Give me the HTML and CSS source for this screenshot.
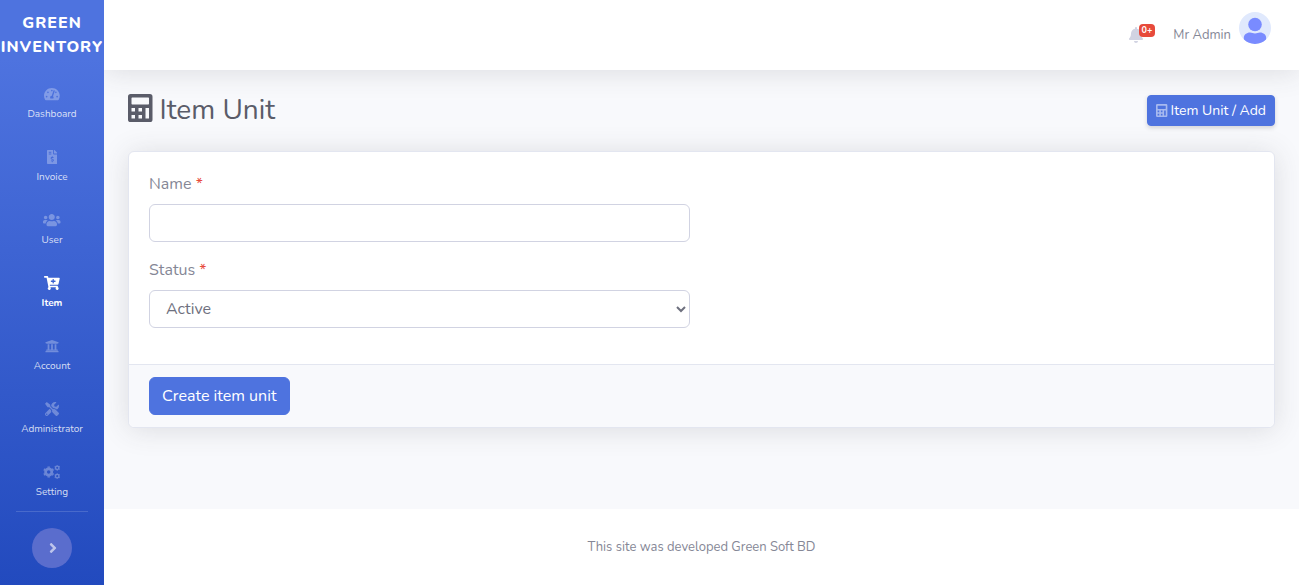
FILE: index.html
```html
<!DOCTYPE html>
<html lang="en">
<head>
    <meta charset="UTF-8">
    <meta name="viewport" content="width=device-width, initial-scale=1.0">
    <title>Item Unit</title>
    <link rel="stylesheet" href="styles.css">
</head>
<body>
    <div class="wrapper">
        <nav class="sidebar">
            <a class="brand" href="#">GREEN INVENTORY</a>
            <ul class="nav">
                <li>
                    <a class="nav-link" href="#">
                        <svg class="icon" viewBox="0 0 576 512" aria-hidden="true"><path d="M288 32C128.94 32 0 160.94 0 320c0 52.8 14.25 102.26 39.06 144.8 5.61 9.62 16.3 15.2 27.44 15.2h443c11.14 0 21.83-5.58 27.44-15.2C561.75 422.26 576 372.8 576 320c0-159.06-128.94-288-288-288zm0 64c14.71 0 26.58 10.13 30.32 23.65-1.11 2.26-2.64 4.23-3.45 6.67l-9.22 27.67c-5.13 3.49-10.97 6.01-17.64 6.01-17.67 0-32-14.33-32-32S270.33 96 288 96zM96 384c-17.67 0-32-14.33-32-32s14.33-32 32-32 32 14.33 32 32-14.33 32-32 32zm48-160c-17.67 0-32-14.33-32-32s14.33-32 32-32 32 14.33 32 32-14.33 32-32 32zm246.77-72.41l-61.33 184C343.13 347.33 352 364.54 352 384c0 11.72-3.38 22.55-8.88 32H232.88c-5.5-9.45-8.88-20.28-8.88-32 0-33.94 26.5-61.43 59.9-63.59l61.34-184.01c4.17-12.56 17.73-19.45 30.36-15.17 12.57 4.19 19.35 17.79 15.17 30.36zm14.66 57.2l15.52-46.55c3.47-1.29 7.13-2.23 11.05-2.23 17.67 0 32 14.33 32 32s-14.33 32-32 32c-11.38-.01-20.89-6.28-26.57-15.22zM480 384c-17.67 0-32-14.33-32-32s14.33-32 32-32 32 14.33 32 32-14.33 32-32 32z"/></svg>
                        <span>Dashboard</span>
                    </a>
                </li>
                <li>
                    <a class="nav-link" href="#">
                        <svg class="icon" viewBox="0 0 384 512" aria-hidden="true"><path d="M377 105L279.1 7c-4.5-4.5-10.6-7-17-7H256v128h128v-6.1c0-6.3-2.5-12.4-7-16.9zm-153 31V0H24C10.7 0 0 10.7 0 24v464c0 13.3 10.7 24 24 24h336c13.3 0 24-10.7 24-24V160H248c-13.2 0-24-10.8-24-24zM64 72c0-4.42 3.58-8 8-8h80c4.42 0 8 3.58 8 8v16c0 4.42-3.58 8-8 8H72c-4.42 0-8-3.58-8-8V72zm0 80v-16c0-4.42 3.58-8 8-8h80c4.42 0 8 3.58 8 8v16c0 4.42-3.58 8-8 8H72c-4.42 0-8-3.58-8-8zm144 263.88V440c0 4.42-3.58 8-8 8h-16c-4.42 0-8-3.58-8-8v-24.29c-11.29-.58-22.27-4.52-31.37-11.35-3.9-2.93-4.1-8.77-.57-12.14l11.75-11.21c2.77-2.64 6.89-2.76 10.13-.73 3.87 2.42 8.26 3.72 12.82 3.72h28.11c6.5 0 11.8-5.92 11.8-13.19 0-5.95-3.61-11.19-8.77-12.73l-45-13.5c-18.59-5.58-31.58-23.42-31.58-43.39 0-24.52 19.05-44.44 42.67-45.07V232c0-4.42 3.58-8 8-8h16c4.42 0 8 3.58 8 8v24.29c11.29.58 22.27 4.51 31.37 11.35 3.9 2.93 4.1 8.77.57 12.14l-11.75 11.21c-2.77 2.64-6.89 2.76-10.13.73-3.87-2.43-8.26-3.72-12.82-3.72h-28.11c-6.5 0-11.8 5.92-11.8 13.19 0 5.95 3.61 11.19 8.77 12.73l45 13.5c18.59 5.58 31.58 23.42 31.58 43.39 0 24.53-19.05 44.44-42.67 45.07z"/></svg>
                        <span>Invoice</span>
                    </a>
                </li>
                <li>
                    <a class="nav-link" href="#">
                        <svg class="icon" viewBox="0 0 640 512" aria-hidden="true"><path d="M96 224c35.3 0 64-28.7 64-64s-28.7-64-64-64-64 28.7-64 64 28.7 64 64 64zm448 0c35.3 0 64-28.7 64-64s-28.7-64-64-64-64 28.7-64 64 28.7 64 64 64zm32 32h-64c-17.6 0-33.5 7.1-45.1 18.6 40.3 22.1 68.9 62 75.1 109.4h66c17.7 0 32-14.3 32-32v-32c0-35.3-28.7-64-64-64zm-256 0c61.9 0 112-50.1 112-112S381.9 32 320 32 208 82.1 208 144s50.1 112 112 112zm76.8 32h-8.3c-20.8 10-43.9 16-68.5 16s-47.6-6-68.5-16h-8.3C179.6 288 128 339.6 128 403.2V432c0 26.5 21.5 48 48 48h288c26.5 0 48-21.5 48-48v-28.8c0-63.6-51.6-115.2-115.2-115.2zm-223.7-13.4C161.5 263.1 145.6 256 128 256H64c-35.3 0-64 28.7-64 64v32c0 17.7 14.3 32 32 32h65.9c6.3-47.4 34.9-87.3 75.2-109.4z"/></svg>
                        <span>User</span>
                    </a>
                </li>
                <li>
                    <a class="nav-link active" href="#">
                        <svg class="icon" viewBox="0 0 576 512" aria-hidden="true"><path d="M504.717 320H211.572l6.545 32h268.418c15.401 0 26.816 14.301 23.403 29.319l-5.517 24.276C523.112 414.668 536 433.828 536 456c0 31.202-25.519 56.444-56.824 55.994-29.823-.429-54.35-24.631-55.155-54.447-.44-16.287 6.085-31.049 16.803-41.548H231.176C241.553 426.165 248 440.326 248 456c0 31.813-26.528 57.431-58.67 55.938-28.54-1.325-51.751-24.385-53.251-52.917-1.158-22.034 10.436-41.455 28.051-51.586L93.883 64H24C10.745 64 0 53.255 0 40V24C0 10.745 10.745 0 24 0h102.529c11.401 0 21.228 8.021 23.513 19.19L159.208 64H551.99c15.401 0 26.816 14.301 23.403 29.319l-47.273 208C525.637 312.246 515.923 320 504.717 320zM408 168h-48v-40c0-8.837-7.163-16-16-16h-16c-8.837 0-16 7.163-16 16v40h-48c-8.837 0-16 7.163-16 16v16c0 8.837 7.163 16 16 16h48v40c0 8.837 7.163 16 16 16h16c8.837 0 16-7.163 16-16v-40h48c8.837 0 16-7.163 16-16v-16c0-8.837-7.163-16-16-16z"/></svg>
                        <span>Item</span>
                    </a>
                </li>
                <li>
                    <a class="nav-link" href="#">
                        <svg class="icon" viewBox="0 0 512 512" aria-hidden="true"><path d="M496 128v16a8 8 0 0 1-8 8h-24v12c0 6.627-5.373 12-12 12H60c-6.627 0-12-5.373-12-12v-12H24a8 8 0 0 1-8-8v-16a8 8 0 0 1 4.941-7.392l232-88a7.996 7.996 0 0 1 6.118 0l232 88A8 8 0 0 1 496 128zm-24 304H40c-13.255 0-24 10.745-24 24v16a8 8 0 0 0 8 8h464a8 8 0 0 0 8-8v-16c0-13.255-10.745-24-24-24zM96 192v192H60c-6.627 0-12 5.373-12 12v20h416v-20c0-6.627-5.373-12-12-12h-36V192h-64v192h-64V192h-64v192h-64V192H96z"/></svg>
                        <span>Account</span>
                    </a>
                </li>
                <li>
                    <a class="nav-link" href="#">
                        <svg class="icon" viewBox="0 0 512 512" aria-hidden="true"><path d="M501.1 395.7L384 278.6c-23.1-23.1-57.6-27.6-85.4-13.9L192 158.1V96L64 0 0 64l96 128h62.1l106.6 106.6c-13.6 27.8-9.2 62.3 13.9 85.4l117.1 117.1c14.6 14.6 38.2 14.6 52.7 0l52.7-52.7c14.5-14.6 14.5-38.2 0-52.7zM331.7 225c28.3 0 54.9 11 74.9 31l19.4 19.4c15.8-6.9 30.8-16.5 43.8-29.5 37.1-37.1 49.7-89.3 37.9-136.7-2.2-9-13.5-12.1-20.1-5.5l-74.4 74.4-67.9-11.3L334 98.9l74.4-74.4c6.6-6.6 3.4-17.9-5.7-20.2-47.4-11.7-99.6.9-136.6 37.9-28.5 28.5-41.9 66.1-41.2 103.6l82.1 82.1c8.1-1.9 16.5-2.9 24.7-2.9zm-103.9 82l-56.7-56.7L18.7 402.8c-25 25-25 65.5 0 90.5s65.5 25 90.5 0l123.6-123.6c-7.6-19.9-9.9-41.6-5-62.7zM64 472c-13.2 0-24-10.8-24-24 0-13.3 10.7-24 24-24s24 10.7 24 24c0 13.2-10.7 24-24 24z"/></svg>
                        <span>Administrator</span>
                    </a>
                </li>
                <li>
                    <a class="nav-link" href="#">
                        <svg class="icon gears" viewBox="0 0 640 512" aria-hidden="true">
                            <circle cx="208" cy="256" r="114" stroke-width="100"/>
                            <path stroke-width="88" d="M208 54v50M208 408v50M33 155l43 25M340 332l43 25M33 357l43-25M340 180l43-25"/>
                            <circle cx="520" cy="104" r="64" stroke-width="52"/>
                            <path stroke-width="52" d="M520 0v20M520 188v20M430 52l17 10M593 146l17 10M430 156l17-10M593 62l17-10"/>
                            <circle cx="520" cy="408" r="64" stroke-width="52"/>
                            <path stroke-width="52" d="M520 304v20M520 492v20M430 356l17 10M593 450l17 10M430 460l17-10M593 366l17-10"/>
                        </svg>
                        <span>Setting</span>
                    </a>
                </li>
            </ul>
            <hr class="divider">
            <button class="toggle" type="button" aria-label="Toggle sidebar">
                <svg class="icon" viewBox="0 0 256 512" aria-hidden="true"><path d="M224.3 273l-136 136c-9.4 9.4-24.6 9.4-33.9 0l-22.6-22.6c-9.4-9.4-9.4-24.6 0-33.9l96.4-96.4-96.4-96.4c-9.4-9.4-9.4-24.6 0-33.9L54.3 103c9.4-9.4 24.6-9.4 33.9 0l136 136c9.5 9.4 9.5 24.6.1 34z"/></svg>
            </button>
        </nav>

        <div class="content">
            <header class="topbar">
                <a class="alerts" href="#" aria-label="Alerts">
                    <svg class="icon" viewBox="0 0 448 512" aria-hidden="true"><path d="M224 512c35.32 0 63.97-28.65 63.97-64H160.03c0 35.35 28.65 64 63.97 64zm215.39-149.71c-19.32-20.76-55.47-51.99-55.47-154.29 0-77.7-54.48-139.9-127.94-155.16V32c0-17.67-14.32-32-31.98-32s-31.98 14.33-31.98 32v20.84C118.56 68.1 64.08 130.3 64.08 208c0 102.3-36.15 133.53-55.47 154.29-6 6.45-8.66 14.16-8.61 21.71.11 16.4 12.98 32 32.1 32h383.8c19.12 0 32-15.6 32.1-32 .05-7.55-2.61-15.27-8.61-21.71z"/></svg>
                    <span class="badge">0+</span>
                </a>
                <a class="user" href="#">
                    <span>Mr Admin</span>
                    <svg class="avatar" viewBox="0 0 32 32" aria-hidden="true">
                        <circle cx="16" cy="16" r="16" fill="#e0e9fd"/>
                        <circle cx="16" cy="12.500" r="6.800" fill="#798bff"/>
                        <path fill="#798bff" d="M5 27.600c-1-4 2-7 6-7 2 0 3 1 5 1s3-1 5-1c4 0 7 3 6 7a16 16 0 0 1-22 0z"/>
                    </svg>
                </a>
            </header>

            <main class="main">
                <div class="heading">
                    <h1>
                        <svg class="icon" viewBox="0 0 448 512" aria-hidden="true"><path fill-rule="evenodd" d="M48 0h352a48 48 0 0 1 48 48v416a48 48 0 0 1-48 48H48a48 48 0 0 1-48-48V48A48 48 0 0 1 48 0zM77 64a13 13 0 0 0-13 13v102a13 13 0 0 0 13 13h294a13 13 0 0 0 13-13V77a13 13 0 0 0-13-13zM64 256h64v64H64zM192 256h64v64h-64zM320 256h64v192h-64zM64 384h64v64H64zM192 384h64v64h-64z"/></svg>
                        Item Unit
                    </h1>
                    <a class="btn btn-sm" href="#">
                        <svg class="icon" viewBox="0 0 448 512" aria-hidden="true"><path fill-rule="evenodd" d="M48 0h352a48 48 0 0 1 48 48v416a48 48 0 0 1-48 48H48a48 48 0 0 1-48-48V48A48 48 0 0 1 48 0zM77 64a13 13 0 0 0-13 13v102a13 13 0 0 0 13 13h294a13 13 0 0 0 13-13V77a13 13 0 0 0-13-13zM64 256h64v64H64zM192 256h64v64h-64zM320 256h64v192h-64zM64 384h64v64H64zM192 384h64v64h-64z"/></svg>
                        Item Unit / Add
                    </a>
                </div>

                <form class="card" action="#" method="post">
                    <div class="card-body">
                        <div class="fields">
                            <div class="form-group">
                                <label for="name">Name <span class="required">*</span></label>
                                <input class="form-control" type="text" id="name" name="name">
                            </div>
                            <div class="form-group">
                                <label for="status">Status <span class="required">*</span></label>
                                <select class="form-control" id="status" name="status">
                                    <option>Active</option>
                                    <option>Inactive</option>
                                </select>
                            </div>
                        </div>
                    </div>
                    <div class="card-footer">
                        <button class="btn" type="submit">Create item unit</button>
                    </div>
                </form>
            </main>

            <footer class="footer">This site was developed Green Soft BD</footer>
        </div>
    </div>
</body>
</html>
```
FILE: styles.css
```css
* {
    box-sizing: border-box;
}
body {
    margin: 0;
    font-family: Nunito, Lato, sans-serif;
    font-size: 16px;
    line-height: 24px;
    color: #858796;
    background-color: #fff;
}
a {
    color: inherit;
    text-decoration: none;
}
.icon {
    display: block;
    height: 1em;
    fill: currentColor;
}
.wrapper {
    display: flex;
    min-height: 100vh;
}

/* sidebar */
.sidebar {
    width: 104px;
    flex-shrink: 0;
    display: flex;
    flex-direction: column;
    background: linear-gradient(180deg, #4e73df 10%, #224abe 100%);
}
.brand {
    height: 70px;
    display: flex;
    align-items: center;
    justify-content: center;
    text-align: center;
    font-weight: 800;
    letter-spacing: 1px;
    color: #fff;
}
.nav {
    list-style: none;
    margin: 0;
    padding: 0;
}
.nav-link {
    display: flex;
    flex-direction: column;
    align-items: center;
    padding: 12px 0 11px;
    font-size: 10px;
    line-height: 15px;
    color: rgba(255, 255, 255, 0.8);
}
.nav-link .icon {
    height: 14px;
    margin: 5px 0 6px;
    color: rgba(255, 255, 255, 0.3);
}
.nav-link.active {
    font-weight: 700;
    color: #fff;
}
.nav-link.active .icon {
    color: #fff;
}
.nav-link .gears {
    fill: none;
    stroke: #fff;
    opacity: 0.3;
}
.divider {
    width: 72px;
    margin: 0 16px 16px;
    border: 0;
    border-top: 1px solid rgba(255, 255, 255, 0.15);
}
.toggle {
    width: 40px;
    height: 40px;
    padding: 0 0 0 2px;
    align-self: center;
    display: flex;
    align-items: center;
    justify-content: center;
    border: 0;
    border-radius: 50%;
    font-size: 16px;
    color: rgba(255, 255, 255, 0.6);
    background-color: #5a6dcd;
}

/* content */
.content {
    flex: 1;
    min-width: 0;
    display: flex;
    flex-direction: column;
    overflow: hidden;
    background-color: #f8f9fc;
}
.topbar {
    height: 70px;
    padding: 0 28px;
    display: flex;
    justify-content: flex-end;
    gap: 18px;
    background-color: #fff;
    box-shadow: 0 2px 28px rgba(58, 59, 69, 0.15);
}
.alerts {
    position: relative;
    width: 26px;
    display: flex;
    align-items: center;
    color: #d1d3e2;
}
.badge {
    position: absolute;
    top: 24px;
    right: 0;
    padding: 2px 3px;
    border-radius: 4px;
    font-size: 9px;
    font-weight: 700;
    line-height: 9px;
    color: #fff;
    background-color: #e74a3b;
}
.user {
    display: flex;
    align-items: center;
    gap: 8px;
    font-size: 13px;
}
.avatar {
    width: 32px;
    height: 32px;
    align-self: flex-start;
    margin-top: 12px;
}
.main {
    flex: 1;
    padding: 24px;
}
.heading {
    display: flex;
    align-items: center;
    justify-content: space-between;
    margin-bottom: 24px;
}
.heading h1 {
    display: flex;
    align-items: flex-start;
    gap: 7px;
    margin: 0;
    font-size: 28px;
    font-weight: 400;
    line-height: 33px;
    color: #5a5c69;
}
.btn {
    display: inline-flex;
    align-items: center;
    gap: 3px;
    padding: 6px 12px;
    border: 1px solid #4e73df;
    border-radius: 6px;
    font-family: inherit;
    font-size: 16px;
    line-height: 24px;
    color: #fff;
    background-color: #4e73df;
}
.btn-sm {
    padding: 4px 8px;
    border-radius: 4px;
    font-size: 14px;
    line-height: 21px;
    box-shadow: 0 2px 4px rgba(58, 59, 69, 0.2);
}
.btn-sm .icon {
    height: 13px;
    color: rgba(255, 255, 255, 0.5);
}
.card {
    border: 1px solid #e3e6f0;
    border-radius: 6px;
    background-color: #fff;
    box-shadow: 0 2px 28px rgba(58, 59, 69, 0.15);
}
.card-body {
    padding: 20px;
}
.fields {
    width: calc(50% - 12px);
}
.form-group {
    margin-bottom: 16px;
}
.form-group label {
    display: block;
    margin-bottom: 8px;
}
.required {
    color: #e74a3b;
}
.form-control {
    display: block;
    width: 100%;
    height: 38px;
    padding: 6px 12px;
    border: 1px solid #d1d3e2;
    border-radius: 6px;
    font-family: inherit;
    font-size: 16px;
    line-height: 24px;
    color: #6e707e;
    background-color: #fff;
}
select.form-control {
    padding: 6px 0 6px 12px;
}
.card-footer {
    padding: 12px 20px;
    border-top: 1px solid #e3e6f0;
    border-radius: 0 0 6px 6px;
    background-color: #f8f9fc;
}
.card-footer .btn {
    display: block;
}
.footer {
    padding: 32px 24px;
    text-align: center;
    font-size: 13px;
    line-height: 12px;
    background-color: #fff;
}
```
